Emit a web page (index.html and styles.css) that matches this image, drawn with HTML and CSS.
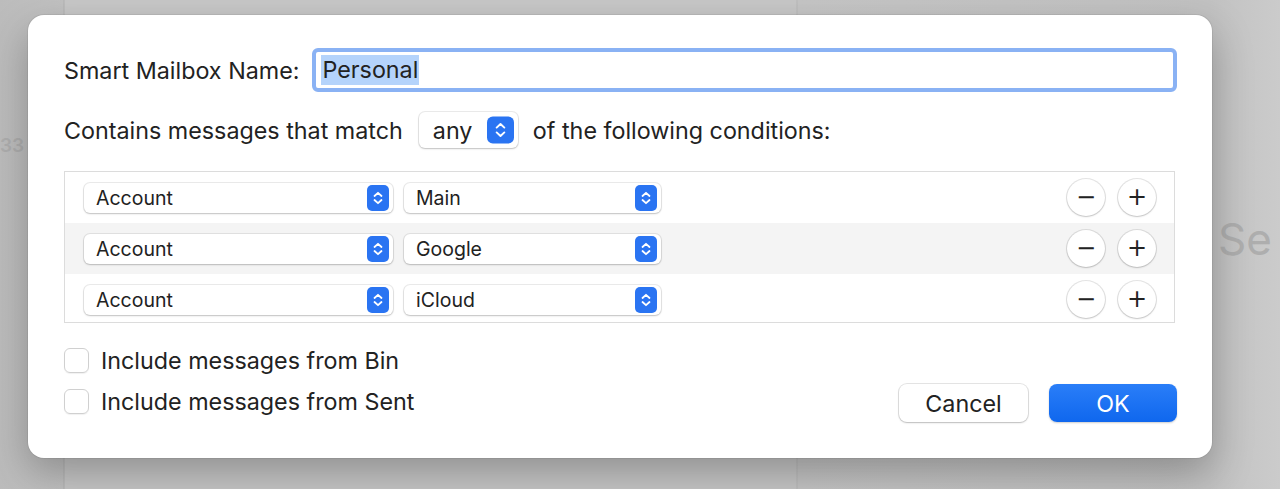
FILE: index.html
```html
<!DOCTYPE html>
<html lang="en">
<head>
  <meta charset="UTF-8">
  <title>Smart Mailbox</title>
  <link rel="stylesheet" href="styles.css">
</head>
<body>
  <div class="backdrop-text count">33</div>
  <div class="backdrop-text title">Se</div>

  <div class="dialog">
    <div class="name-row">
      <label class="label">Smart Mailbox Name:</label>
      <div class="field"><span class="selected">Personal</span></div>
    </div>

    <div class="match-row">
      <span class="label">Contains messages that match</span>
      <div class="popup popup-any">
        <span>any</span>
        <svg class="stepper big" viewBox="0 0 28 28"><rect width="28" height="28" rx="6" fill="#2a74f2"/><path d="M10 11.5 L14 7.8 L18 11.5 M10 16.5 L14 20.2 L18 16.5" stroke="#fff" stroke-width="2" fill="none" stroke-linecap="round" stroke-linejoin="round"/></svg>
      </div>
      <span class="label">of the following conditions:</span>
    </div>

    <div class="rules">
      <div class="rule">
        <div class="popup popup-field"><span>Account</span><svg class="stepper" viewBox="0 0 22 26"><rect width="22" height="26" rx="5" fill="#2a74f2"/><path d="M7.5 11 L11 7.8 L14.5 11 M7.5 15 L11 18.2 L14.5 15" stroke="#fff" stroke-width="1.8" fill="none" stroke-linecap="round" stroke-linejoin="round"/></svg></div>
        <div class="popup popup-value"><span>Main</span><svg class="stepper" viewBox="0 0 22 26"><rect width="22" height="26" rx="5" fill="#2a74f2"/><path d="M7.5 11 L11 7.8 L14.5 11 M7.5 15 L11 18.2 L14.5 15" stroke="#fff" stroke-width="1.8" fill="none" stroke-linecap="round" stroke-linejoin="round"/></svg></div>
        <div class="round-btns">
          <button class="round">&minus;</button>
          <button class="round">+</button>
        </div>
      </div>
      <div class="rule alt">
        <div class="popup popup-field"><span>Account</span><svg class="stepper" viewBox="0 0 22 26"><rect width="22" height="26" rx="5" fill="#2a74f2"/><path d="M7.5 11 L11 7.8 L14.5 11 M7.5 15 L11 18.2 L14.5 15" stroke="#fff" stroke-width="1.8" fill="none" stroke-linecap="round" stroke-linejoin="round"/></svg></div>
        <div class="popup popup-value"><span>Google</span><svg class="stepper" viewBox="0 0 22 26"><rect width="22" height="26" rx="5" fill="#2a74f2"/><path d="M7.5 11 L11 7.8 L14.5 11 M7.5 15 L11 18.2 L14.5 15" stroke="#fff" stroke-width="1.8" fill="none" stroke-linecap="round" stroke-linejoin="round"/></svg></div>
        <div class="round-btns">
          <button class="round">&minus;</button>
          <button class="round">+</button>
        </div>
      </div>
      <div class="rule">
        <div class="popup popup-field"><span>Account</span><svg class="stepper" viewBox="0 0 22 26"><rect width="22" height="26" rx="5" fill="#2a74f2"/><path d="M7.5 11 L11 7.8 L14.5 11 M7.5 15 L11 18.2 L14.5 15" stroke="#fff" stroke-width="1.8" fill="none" stroke-linecap="round" stroke-linejoin="round"/></svg></div>
        <div class="popup popup-value"><span>iCloud</span><svg class="stepper" viewBox="0 0 22 26"><rect width="22" height="26" rx="5" fill="#2a74f2"/><path d="M7.5 11 L11 7.8 L14.5 11 M7.5 15 L11 18.2 L14.5 15" stroke="#fff" stroke-width="1.8" fill="none" stroke-linecap="round" stroke-linejoin="round"/></svg></div>
        <div class="round-btns">
          <button class="round">&minus;</button>
          <button class="round">+</button>
        </div>
      </div>
    </div>

    <div class="footer">
      <label class="check"><span class="box"></span>Include messages from Bin</label>
      <label class="check second"><span class="box"></span>Include messages from Sent</label>
      <div class="actions">
        <button class="btn">Cancel</button>
        <button class="btn primary">OK</button>
      </div>
    </div>
  </div>
</body>
</html>
```

FILE: styles.css
```css
* {
  margin: 0;
  padding: 0;
  box-sizing: border-box;
}

body {
  width: 1280px;
  height: 489px;
  overflow: hidden;
  position: relative;
  font-family: Inter, Roboto, sans-serif;
  color: #222;
  background:
    linear-gradient(to right,
      #bcbcbc 0, #c2c2c2 63px, #b2b2b2 64px, #c8c8c8 65px,
      #c8c8c8 796px, #b9b9b9 797px, #c6c6c6 798px,
      #c2c2c2 1210px, #cbcbcb 100%);
}

.backdrop-text {
  position: absolute;
  color: #aeaeae;
}

.count {
  left: 0;
  top: 134px;
  font-size: 19px;
  font-weight: 600;
}

.title {
  left: 1218px;
  top: 212px;
  font-size: 44px;
}

.dialog {
  position: relative;
  width: 1184px;
  height: 443px;
  margin: 15px 0 0 28px;
  padding: 33px 35px 0 36px;
  background: #fff;
  border-radius: 16px;
  box-shadow: 0 16px 40px rgba(0, 0, 0, 0.28), 0 0 0 1px rgba(0, 0, 0, 0.06);
}

.label {
  font-size: 23.3px;
  white-space: nowrap;
}

.name-row {
  display: flex;
  align-items: center;
  gap: 13px;
  height: 44px;
}

.field {
  flex: 1;
  height: 44px;
  border: 4px solid #8ab2f4;
  border-radius: 6px;
  padding: 0 5px;
  display: flex;
  align-items: center;
  font-size: 23.3px;
}

.selected {
  background: #b4d3fb;
  padding: 2px 1px;
  line-height: 26px;
}

.match-row {
  display: flex;
  align-items: center;
  height: 36px;
  margin-top: 20px;
}

.popup {
  display: flex;
  align-items: center;
  justify-content: space-between;
  background: #fff;
  border-radius: 6px;
  box-shadow: 0 0 0 1px rgba(0, 0, 0, 0.08), 0 1px 2px rgba(0, 0, 0, 0.18);
  font-size: 19.5px;
}

.popup-any {
  width: 99px;
  height: 36px;
  margin: 0 15px 0 16px;
  padding: 0 4px 0 14px;
  font-size: 23.3px;
}

.stepper {
  width: 22px;
  height: 26px;
  display: block;
}

.stepper.big {
  width: 27px;
  height: 28px;
}

.rules {
  margin-top: 23px;
  width: 1111px;
  height: 152px;
  border: 1px solid #dcdcdc;
}

.rule {
  display: flex;
  align-items: center;
  height: 51px;
  padding: 0 18px 0 19px;
}

.rule.alt {
  background: #f4f4f4;
}

.popup-field {
  width: 309px;
  height: 30px;
  padding: 0 4px 0 12px;
}

.popup-value {
  width: 257px;
  height: 30px;
  margin-left: 11px;
  padding: 0 4px 0 12px;
}

.round-btns {
  margin-left: auto;
  display: flex;
  gap: 13px;
}

.round {
  width: 38px;
  height: 37px;
  border-radius: 50%;
  border: none;
  background: #fff;
  box-shadow: 0 0 0 1px rgba(0, 0, 0, 0.1), 0 1px 2px rgba(0, 0, 0, 0.15);
  font-family: 'DejaVu Sans', sans-serif;
  font-size: 24px;
  color: #222;
  line-height: 37px;
}

.footer {
  display: grid;
  grid-template-columns: 1fr auto;
  grid-template-rows: 25px 25px;
  row-gap: 16px;
  margin-top: 25px;
}

.check {
  display: flex;
  align-items: center;
  height: 25px;
  gap: 12px;
  font-size: 23.3px;
  grid-column: 1;
}

.box {
  width: 25px;
  height: 25px;
  border-radius: 6px;
  border: 1px solid #d0d0d0;
  box-shadow: 0 1px 1px rgba(0, 0, 0, 0.06);
}

.actions {
  grid-column: 2;
  grid-row: 2;
  align-self: center;
  display: flex;
  gap: 21px;
  margin-top: 3px;
}

.btn {
  width: 129px;
  height: 38px;
  border: none;
  border-radius: 8px;
  background: #fff;
  box-shadow: 0 0 0 1px rgba(0, 0, 0, 0.1), 0 1px 2px rgba(0, 0, 0, 0.18);
  font-family: Inter, Roboto, sans-serif;
  font-size: 23.3px;
  color: #222;
}

.btn.primary {
  width: 128px;
  background: linear-gradient(#2a7ef8, #0f67ee);
  box-shadow: 0 1px 2px rgba(0, 0, 0, 0.2);
  color: #fff;
}
```
